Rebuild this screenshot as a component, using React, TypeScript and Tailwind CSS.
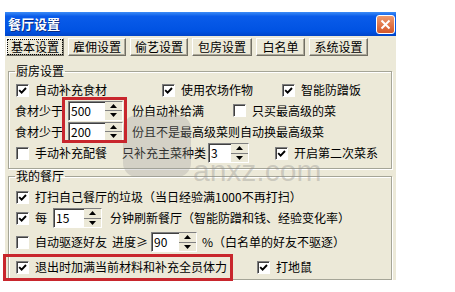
import React from 'react'

function Check({ on }: { on?: boolean }) {
  return (
    <span className="flex h-[13px] w-[13px] shrink-0 items-center justify-center border-t border-l border-t-[#808080] border-l-[#808080] border-r border-b border-r-white border-b-white bg-white shadow-[inset_1px_1px_0_#404040]">
      {on && (
        <svg width="9" height="9" viewBox="0 0 9 9">
          <path d="M1.2 4.2 L3.6 6.6 L8 2" fill="none" stroke="#000" strokeWidth="1.9" />
        </svg>
      )}
    </span>
  )
}

function Box({ on, label, className = '' }: { on?: boolean; label: string; className?: string }) {
  return (
    <div className={`flex items-center gap-[6px] ${className}`}>
      <Check on={on} />
      <span className="whitespace-nowrap">{label}</span>
    </div>
  )
}

function Arrow({ up }: { up?: boolean }) {
  return (
    <svg width="7" height="4" viewBox="0 0 7 4">
      <path d={up ? 'M0 4 L3.5 0 L7 4 Z' : 'M0 0 L3.5 4 L7 0 Z'} fill="#000" />
    </svg>
  )
}

function Spin({ value, className }: { value: string; className: string }) {
  return (
    <div className={`flex h-[20px] shrink-0 border-t border-l border-t-[#808080] border-l-[#808080] border-r border-b border-r-white border-b-white bg-white shadow-[inset_1px_1px_0_#404040] ${className}`}>
      <span className="flex-1 pl-[2px] pt-[2px] leading-[14px]">{value}</span>
      <div className="flex w-[17px] flex-col">
        <div className="flex flex-1 items-center justify-center border-b border-b-[#808080] bg-[#ECE9D8]">
          <Arrow up />
        </div>
        <div className="flex flex-1 items-center justify-center bg-[#ECE9D8]">
          <Arrow />
        </div>
      </div>
    </div>
  )
}

const tabs = [
  { label: '基本设置', w: 'w-[58px]' },
  { label: '雇佣设置', w: 'w-[58px]' },
  { label: '偷艺设置', w: 'w-[58px]' },
  { label: '包房设置', w: 'w-[60px]' },
  { label: '白名单', w: 'w-[49px]' },
  { label: '系统设置', w: 'w-[59px]' },
]

export default function App() {
  return (
    <div className="min-h-screen bg-white pl-[5px] pt-[12px]">
      <div className="relative flex h-[268px] w-[391px] flex-col bg-[#ECE9D8] font-['Noto_Sans_CJK_SC',sans-serif] text-[12px] leading-[14px] text-black">
        {/* title bar */}
        <div className="flex h-[24px] items-center justify-between bg-[linear-gradient(to_bottom,#3C8CF6_0%,#0A5CEA_18%,#0052E2_80%,#0044C8_100%)] pl-[3px] pr-[1px]">
          <span className="text-[13px] font-bold text-white [text-shadow:1px_1px_0_#0A2A80]">餐厅设置</span>
          <div className="flex h-[19px] w-[19px] items-center justify-center rounded-[3px] border border-white bg-[linear-gradient(to_bottom,#EE9A6E,#D4572A)]">
            <svg width="11" height="11" viewBox="0 0 11 11">
              <path d="M1.5 1.5 L9.5 9.5 M9.5 1.5 L1.5 9.5" stroke="#fff" strokeWidth="2" />
            </svg>
          </div>
        </div>

        {/* tabs */}
        <div className="flex gap-[4px] pl-[1px] pt-[2px]">
          {tabs.map((t, i) => (
            <div
              key={t.label}
              className={`flex h-[18px] items-center justify-center border-t border-l border-t-white border-l-white border-r border-b border-r-[#716F64] border-b-[#716F64] bg-[#ECE9D8] shadow-[inset_-1px_-1px_0_#ACA899] ${t.w}`}
            >
              {i === 0 ? (
                <span className="flex h-[14px] w-[54px] items-center justify-center outline outline-1 outline-dotted outline-black">{t.label}</span>
              ) : (
                <span>{t.label}</span>
              )}
            </div>
          ))}
        </div>

        {/* 厨房设置 */}
        <fieldset className="ml-[3px] mr-[4px] mt-[8px] border border-[#A5A597] pb-[4px] pl-[6px] shadow-[1px_1px_0_#fff,inset_1px_1px_0_#fff]">
          <legend className="px-[1px]">厨房设置</legend>
          <div className="pt-[2px]">
            <div className="flex h-[20px] items-center pl-[1px]">
              <Box on label="自动补充食材" className="w-[146px]" />
              <Box on label="使用农场作物" className="w-[120px]" />
              <Box on label="智能防蹭饭" />
            </div>
            <div className="flex h-[21px] items-center">
              <span className="w-[53px]">食材少于</span>
              <Spin value="500" className="w-[55px]" />
              <span className="ml-[9px] w-[101px] whitespace-nowrap">份自动补给满</span>
              <Box label="只买最高级的菜" />
            </div>
            <div className="flex h-[21px] items-center">
              <span className="w-[53px]">食材少于</span>
              <Spin value="200" className="w-[55px]" />
              <span className="ml-[9px] whitespace-nowrap">份且不是最高级菜则自动换最高级菜</span>
            </div>
            <div className="flex h-[22px] items-center pl-[1px]">
              <Box label="手动补充配餐" className="w-[106px]" />
              <span className="w-[86px] whitespace-nowrap">只补充主菜种类</span>
              <Spin value="3" className="w-[41px]" />
              <Box on label="开启第二次菜系" className="ml-[26px]" />
            </div>
          </div>
        </fieldset>

        {/* 我的餐厅 */}
        <fieldset className="ml-[3px] mr-[4px] flex-1 border border-[#A5A597] pl-[6px] shadow-[1px_1px_0_#fff,inset_1px_1px_0_#fff]">
          <legend className="px-[1px]">我的餐厅</legend>
          <div className="pt-[4px] pl-[1px]">
            <div className="flex h-[20px] items-center">
              <Box on label="打扫自己餐厅的垃圾（当日经验满1000不再打扫）" />
            </div>
            <div className="mt-[1px] flex h-[20px] items-center">
              <Box on label="每" className="w-[37px]" />
              <Spin value="15" className="w-[49px]" />
              <span className="ml-[8px] whitespace-nowrap">分钟刷新餐厅（智能防蹭和钱、经验变化率）</span>
            </div>
            <div className="mt-[3px] flex h-[22px] items-center">
              <Box label="自动驱逐好友" className="w-[96px]" />
              <span className="w-[39px] whitespace-nowrap">进度≥</span>
              <Spin value="90" className="w-[46px]" />
              <span className="ml-[5px] whitespace-nowrap">%（白名单的好友不驱逐）</span>
            </div>
            <div className="mt-[3px] flex h-[22px] items-center">
              <Box on label="退出时加满当前材料和补充全员体力" className="w-[241px]" />
              <Box on label="打地鼠" />
            </div>
          </div>
        </fieldset>

        {/* watermark */}
        <div className="pointer-events-none absolute left-[118px] top-[103px] h-[62px] w-[68px] rounded-[14px] bg-[#9A9A9A]/30" />
        <span className="pointer-events-none absolute left-[188px] top-[142px] font-['Liberation_Sans',sans-serif] text-[30px] leading-[34px] text-[#8C8C8C]/35">anxz.com</span>

        {/* red annotations */}
        <div className="pointer-events-none absolute left-[57px] top-[85px] h-[46px] w-[65px] border-[3px] border-[#C8262D]" />
        <div className="pointer-events-none absolute left-[-2px] top-[242px] h-[27px] w-[230px] border-[3px] border-[#C8262D]" />
      </div>
    </div>
  )
}
